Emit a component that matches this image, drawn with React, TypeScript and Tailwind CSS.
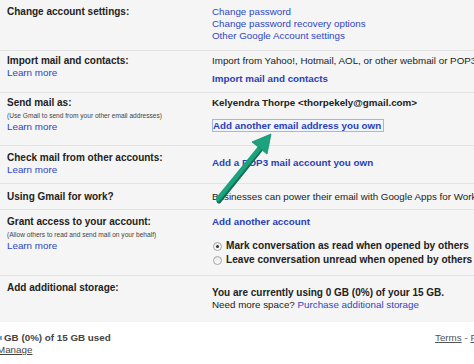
import type { ReactNode } from "react";

const LINK = "text-[#2f46c2]";
const BOLD_LINK = "font-bold text-[#2a3fb8]";

function Row({ left, right, h, lp, rp, last }: { left: ReactNode; right: ReactNode; h: string; lp: string; rp: string; last?: boolean }) {
  return (
    <div className={"flex " + h + (last ? "" : " border-b border-[#e3e3e3]")}>
      <div className={"w-[212px] shrink-0 pl-[7px] " + lp}>{left}</div>
      <div className={"flex-1 whitespace-nowrap " + rp}>{right}</div>
    </div>
  );
}

function Label({ children }: { children: ReactNode }) {
  return <div className="font-bold text-[10px] text-[#222] leading-[12px]">{children}</div>;
}

function Small({ children }: { children: ReactNode }) {
  return <div className="mt-[2px] text-[6.6px] leading-[10px] text-[#444] whitespace-nowrap">{children}</div>;
}

function LearnMore() {
  return <div className={LINK + " leading-[12px]"}>Learn more</div>;
}

function Radio({ checked, children }: { checked?: boolean; children: ReactNode }) {
  return (
    <div className="flex items-center gap-[4px] leading-[14px] text-[10.1px] font-bold text-[#222]">
      <span className="ml-[1px] w-[9px] h-[9px] rounded-full border border-[#a5a5a5] bg-gradient-to-b from-[#e9e9e9] to-[#fbfbfb] grid place-items-center">
        {checked && <span className="w-[3px] h-[3px] rounded-full bg-[#333]" />}
      </span>
      {children}
    </div>
  );
}

function Arrow() {
  return (
    <svg className="absolute left-0 top-0 pointer-events-none" width="474" height="364" viewBox="0 0 474 364">
      <line x1="219" y1="201" x2="260" y2="150" stroke="#0f6f57" strokeWidth="5" strokeLinecap="round" />
      <line x1="218" y1="199" x2="259.7" y2="148" stroke="#1ca37e" strokeWidth="4.5" strokeLinecap="round" />
      <polygon points="271,134 267,154 252,142" fill="#1ca37e" stroke="#148a69" strokeWidth="0.8" />
    </svg>
  );
}

export default function App() {
  return (
    <div className="relative w-[474px] h-[364px] overflow-hidden bg-white text-[9.8px] text-[#222] font-['Liberation_Sans',Arial,sans-serif]">
      <div className="bg-[#f5f5f5]">
        <Row
          h="h-[51px]"
          lp="pt-[6px]"
          rp="pt-[6px]"
          left={<Label>Change account settings:</Label>}
          right={
            <div className={LINK + " leading-[12px]"}>
              <div>Change password</div>
              <div>Change password recovery options</div>
              <div>Other Google Account settings</div>
            </div>
          }
        />
        <Row
          h="h-[42px]"
          lp="pt-[4px]"
          rp="pt-[4px]"
          left={
            <>
              <Label>Import mail and contacts:</Label>
              <LearnMore />
            </>
          }
          right={
            <>
              <div className="leading-[12px]">Import from Yahoo!, Hotmail, AOL, or other webmail or POP3 accounts.</div>
              <div className={BOLD_LINK + " mt-[6px] leading-[12px]"}>Import mail and contacts</div>
            </>
          }
        />
        <Row
          h="h-[53px]"
          lp="pt-[4px]"
          rp="pt-[4px]"
          left={
            <>
              <Label>Send mail as:</Label>
              <Small>(Use Gmail to send from your other email addresses)</Small>
              <LearnMore />
            </>
          }
          right={
            <>
              <div className="font-bold leading-[12px]">Kelyendra Thorpe &lt;thorpekely@gmail.com&gt;</div>
              <div className="mt-[10px]">
                <span className={BOLD_LINK + " inline-block leading-[11px] border border-[#9fb7e8] bg-[#f1f5fd] pr-[2px]"}>
                  Add another email address you own
                </span>
              </div>
            </>
          }
        />
        <Row
          h="h-[38px]"
          lp="pt-[6px]"
          rp="pt-[11px]"
          left={
            <>
              <Label>Check mail from other accounts:</Label>
              <LearnMore />
            </>
          }
          right={<div className={BOLD_LINK + " leading-[12px]"}>Add a POP3 mail account you own</div>}
        />
        <Row
          h="h-[26px]"
          lp="pt-[7px]"
          rp="pt-[7px]"
          left={<Label>Using Gmail for work?</Label>}
          right={<div className="leading-[12px]">Businesses can power their email with Google Apps for Work.</div>}
        />
        <Row
          h="h-[66px]"
          lp="pt-[6px]"
          rp="pt-[6px]"
          left={
            <>
              <Label>Grant access to your account:</Label>
              <Small>(Allow others to read and send mail on your behalf)</Small>
              <LearnMore />
            </>
          }
          right={
            <>
              <div className={BOLD_LINK + " leading-[12px]"}>Add another account</div>
              <div className="mt-[11px]">
                <Radio checked>Mark conversation as read when opened by others</Radio>
                <Radio>Leave conversation unread when opened by others</Radio>
              </div>
            </>
          }
        />
        <Row
          last
          h="h-[46px]"
          lp="pt-[6px]"
          rp="pt-[11px]"
          left={<Label>Add additional storage:</Label>}
          right={
            <div className="leading-[12px]">
              <div className="font-bold text-[10px]">You are currently using 0 GB (0%) of your 15 GB.</div>
              <div>
                Need more space? <span className={LINK}>Purchase additional storage</span>
              </div>
            </div>
          }
        />
      </div>
      <div className="flex justify-between pt-[10px]">
        <div className="leading-[11px] text-[#444]">
          <div className="flex items-center font-bold">
            <span className="w-[2px] h-[4px] bg-[#6aa4dc] mr-[2px]" />
            GB (0%) of 15 GB used
          </div>
          <div className="underline ml-[-3px] mt-[1px]">Manage</div>
        </div>
        <div className="leading-[12px] text-[#555] whitespace-nowrap mr-[-20px] ml-auto w-[59px]">
          <span className="underline">Terms</span> - <span className="underline">Privacy</span>
        </div>
      </div>
      <Arrow />
    </div>
  );
}
